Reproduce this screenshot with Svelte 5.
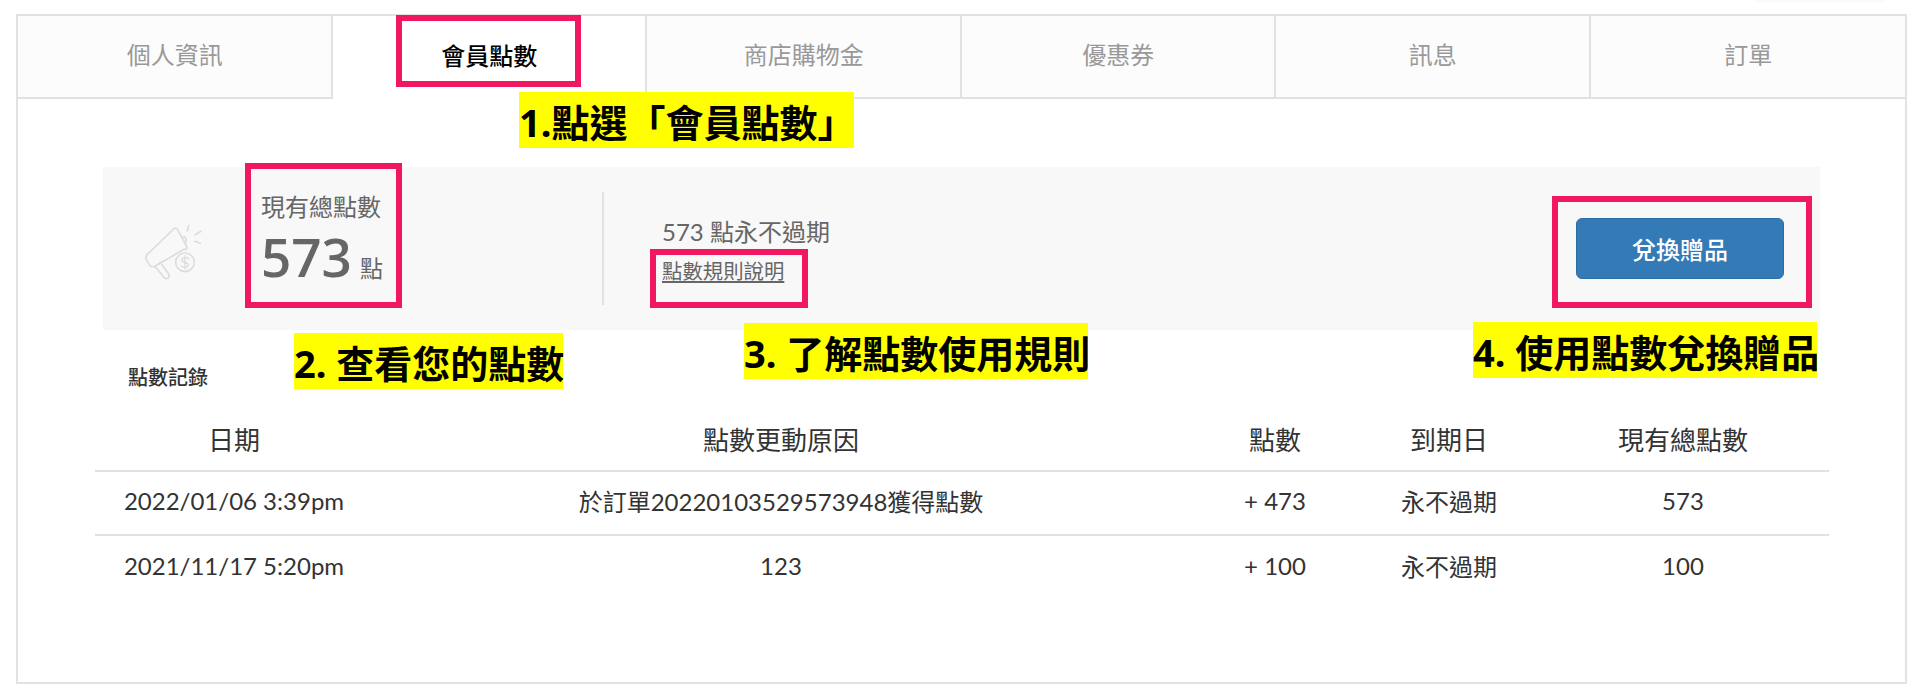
<script lang="ts">
	const tabs = ['個人資訊', '會員點數', '商店購物金', '優惠券', '訊息', '訂單'];
	const activeTab = 1;

	const records = [
		{ date: '2022/01/06 3:39pm', reason: '於訂單20220103529573948獲得點數', points: '+ 473', expiry: '永不過期', total: '573' },
		{ date: '2021/11/17 5:20pm', reason: '123', points: '+ 100', expiry: '永不過期', total: '100' }
	];
</script>

<div class="page">
	<div class="top-shadow"></div>

	<div class="account">
		<nav class="tabs">
			{#each tabs as tab, i}
				<div class="tab" class:active={i === activeTab}>{tab}</div>
			{/each}
		</nav>

		<section class="summary">
			<svg class="icon" viewBox="0 0 240 210" fill="none" stroke="#dcdcdc" stroke-width="5" stroke-linecap="round" stroke-linejoin="round" aria-hidden="true">
				<path d="M128 48c4-7 11-7 15-1l27 50c3 6-1 11-8 9l-86 50c-6 4-14 2-18-4l-8-13c-4-7-3-14 3-19z" />
				<path d="M76 158l27 33c5 5 12 3 14-3 1-3 1-6-1-9l-20-27" />
				<path d="M86 150l12-8" />
				<path d="M160 68c7 0 11 8 7 17" />
				<path d="M176 35l-4 16M213 52l-18 10M211 88l-17-6" />
				<circle cx="165" cy="145" r="28" />
				<path d="M176 134c-5-5-20-5-21 4-1 10 21 5 20 15-1 8-16 8-21 3M165 125v40" stroke-width="4" />
			</svg>

			<div class="total">
				<div class="total-label">現有總點數</div>
				<div class="total-value"><span class="number">573</span><span class="unit">點</span></div>
			</div>

			<div class="divider"></div>

			<div class="info">
				<div class="expiry">573 點永不過期</div>
				<a class="rules" href="#rules">點數規則說明</a>
			</div>

			<button class="redeem">兌換贈品</button>
		</section>

		<h3 class="records-title">點數記錄</h3>

		<table class="records">
			<colgroup>
				<col class="c-date" />
				<col class="c-reason" />
				<col class="c-points" />
				<col class="c-expiry" />
				<col class="c-total" />
			</colgroup>
			<thead>
				<tr>
					<th>日期</th>
					<th>點數更動原因</th>
					<th>點數</th>
					<th>到期日</th>
					<th>現有總點數</th>
				</tr>
			</thead>
			<tbody>
				{#each records as r}
					<tr>
						<td>{r.date}</td>
						<td>{r.reason}</td>
						<td>{r.points}</td>
						<td>{r.expiry}</td>
						<td>{r.total}</td>
					</tr>
				{/each}
			</tbody>
		</table>
	</div>

	<!-- annotations drawn over the page -->
	<div class="mark mark-1"></div>
	<div class="mark mark-2"></div>
	<div class="mark mark-3"></div>
	<div class="mark mark-4"></div>
	<div class="note note-1">1.點選「會員點數」</div>
	<div class="note note-2">2. 查看您的點數</div>
	<div class="note note-3">3. 了解點數使用規則</div>
	<div class="note note-4">4. 使用點數兌換贈品</div>
</div>

<style>
	:global(body) {
		margin: 0;
		background: #fff;
	}

	.page {
		position: relative;
		height: 697px;
		padding: 14px 13px 0 16px;
		box-sizing: border-box;
		overflow: hidden;
		font-family: Lato, 'Noto Sans CJK TC', sans-serif;
		color: #333;
	}

	.top-shadow {
		position: absolute;
		top: -6px;
		left: 1755px;
		width: 130px;
		height: 6px;
		box-shadow: 0 0 5px rgba(0, 0, 0, 0.05);
	}

	.account {
		height: 670px;
		box-sizing: border-box;
		border: 2px solid #e2e2e2;
	}

	.tabs {
		display: grid;
		grid-template-columns: repeat(6, 1fr);
		height: 83px;
	}

	.tab {
		display: flex;
		align-items: center;
		justify-content: center;
		padding: 0 0 6px 1px;
		box-sizing: border-box;
		background: #fcfcfc;
		border-right: 2px solid #e2e2e2;
		border-bottom: 2px solid #e2e2e2;
		font-size: 24px;
		color: #999;
	}

	.tab:last-child {
		border-right: none;
	}

	.tab.active {
		background: #fff;
		border-bottom: none;
		color: #000;
		font-weight: 500;
	}

	.summary {
		display: flex;
		align-items: center;
		height: 163px;
		margin: 68px 85px 0 85px;
		padding: 0 36px 0 43px;
		background: #f8f8f8;
	}

	.icon {
		width: 80px;
		height: 70px;
		margin: 0 51px 0 -16px;
		flex: none;
	}

	.total {
		width: 341px;
		margin-bottom: 9px;
		flex: none;
		color: #666;
	}

	.total-label {
		font-size: 24px;
		line-height: 34px;
	}

	.total-value {
		display: flex;
		align-items: baseline;
		line-height: 62px;
		margin-top: 2px;
		font-family: 'Open Sans', 'Noto Sans CJK TC', sans-serif;
	}

	.number {
		font-size: 53px;
		font-weight: 600;
	}

	.unit {
		font-size: 23px;
		margin-left: 8px;
	}

	.divider {
		width: 2px;
		height: 113px;
		background: #e2e2e2;
		flex: none;
	}

	.info {
		flex: 1;
		padding: 3px 0 0 58px;
		color: #666;
	}

	.expiry {
		font-size: 24px;
		line-height: 34px;
	}

	.rules {
		display: inline-block;
		margin-top: 7px;
		font-size: 20.4px;
		line-height: 30px;
		color: #666;
		text-decoration: underline;
	}

	.redeem {
		width: 208px;
		height: 61px;
		border: 1px solid #2e6da4;
		border-radius: 6px;
		background: #337ab7;
		color: #fff;
		font: inherit;
		font-size: 24px;
		font-weight: 500;
	}

	.records-title {
		margin: 30px 0 0 110px;
		font-size: 20px;
		line-height: 34px;
		font-weight: 500;
		color: #333;
	}

	.records {
		width: 1734px;
		margin: 13px 0 0 77px;
		border-collapse: collapse;
		table-layout: fixed;
		font-size: 24px;
		color: #333;
	}

	.c-date { width: 278px; }
	.c-reason { width: 816px; }
	.c-points { width: 172px; }
	.c-expiry { width: 176px; }
	.c-total { width: 292px; }

	th,
	td {
		height: 64px;
		padding: 0;
		box-sizing: border-box;
		text-align: center;
		font-weight: 400;
	}

	th {
		font-size: 26px;
	}

	td {
		padding-bottom: 5px;
	}

	thead tr,
	tbody tr:first-child {
		border-bottom: 2px solid #e2e2e2;
	}

	.mark {
		position: absolute;
		box-sizing: border-box;
		border: 6px solid #f0195f;
	}

	.mark-1 { left: 396px; top: 15px; width: 185px; height: 72px; }
	.mark-2 { left: 245px; top: 163px; width: 157px; height: 145px; }
	.mark-3 { left: 650px; top: 249px; width: 158px; height: 59px; }
	.mark-4 { left: 1552px; top: 196px; width: 260px; height: 112px; }

	.note {
		position: absolute;
		height: 56px;
		background: #ff0;
		color: #000;
		font-size: 38px;
		font-weight: 700;
		line-height: 60px;
		white-space: nowrap;
		font-family: 'Noto Sans', 'Noto Sans CJK TC', sans-serif;
	}

	.note-1 { left: 519px; top: 92px; width: 335px; }
	.note-2 { left: 294px; top: 333px; width: 269px; }
	.note-3 { left: 744px; top: 323px; width: 344px; }
	.note-4 { left: 1473px; top: 322px; width: 344px; }
</style>
